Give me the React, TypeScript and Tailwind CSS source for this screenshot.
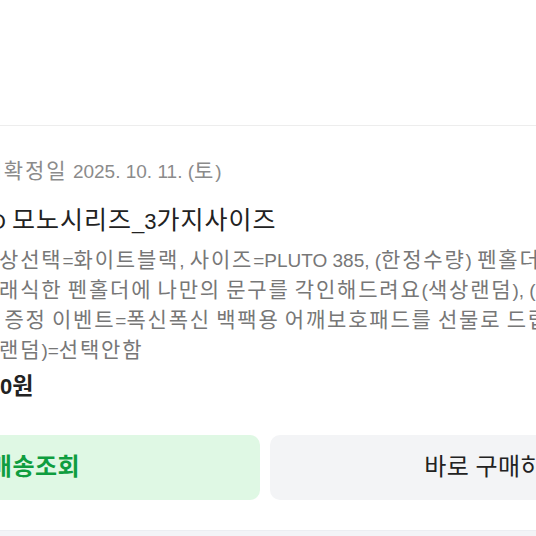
import React from 'react';

// Hangul in the reference is drawn bigger and looser than the Latin next to it, so Hangul runs get their own size
function Ko({ text, size }: { text: string; size: string }) {
  const parts = text.split(/([가-힣]+)/);
  return (
    <span>
      {parts.map((p, i) =>
        /[가-힣]/.test(p) ? (
          <span key={i} className={`leading-none ${size}`}>
            {p}
          </span>
        ) : (
          <React.Fragment key={i}>{p}</React.Fragment>
        )
      )}
    </span>
  );
}

const options = [
  '색상선택=화이트블랙, 사이즈=PLUTO 385, (한정수량) 펜홀더 각인 서비스=',
  '클래식한 펜홀더에 나만의 문구를 각인해드려요(색상랜덤), (한정수량)',
  '품 증정 이벤트=폭신폭신 백팩용 어깨보호패드를 선물로 드립니다(색상',
  '상랜덤)=선택안함',
];

export default function App() {
  return (
    <div className="w-[536px] h-[536px] overflow-hidden bg-white font-['Liberation_Sans','Noto_Sans_CJK_KR',sans-serif]">
      <div className="h-[125px]" />
      <div className="border-t border-[#ededed]">
        <div className="pt-[32px] whitespace-nowrap">
          <div className="-ml-[39px] h-[28px] text-[19px] leading-[28px] text-[#8b8b8b]">
            <Ko text="구매확정일 2025. 10. 11. (토)" size="text-[21px] tracking-[2px]" />
          </div>
          <div className="-ml-[67px] mt-[21px] h-[30px] text-[22px] leading-[30px] text-[#222]">
            <Ko text="PLUTO 모노시리즈_3가지사이즈" size="text-[25px] tracking-[1px]" />
          </div>
          <div className="mt-[9px] text-[19px] leading-[30px] text-[#777]">
            {options.map((o) => (
              <div key={o} className="-ml-[22px] h-[30px]">
                <Ko text={o} size="text-[21px] tracking-[1.8px]" />
              </div>
            ))}
          </div>
          <div className="-ml-[55px] mt-[6px] h-[30px] text-[22px] leading-[30px] font-bold text-[#222]">
            <Ko text="29,000원" size="text-[23px]" />
          </div>
        </div>

        <div className="-ml-[190px] mt-[33px] flex w-[910px] gap-[10px]">
          <button className="flex h-[65px] flex-1 items-center justify-center rounded-[10px] bg-[#dff8e4] text-[22px] font-bold text-[#0f9d3f]">
            <Ko text="배송조회" size="text-[24px] tracking-[0.5px]" />
          </button>
          <button className="flex h-[65px] flex-1 items-center justify-center rounded-[10px] bg-[#f3f4f6] text-[22px] text-[#222]">
            <Ko text="바로 구매하기" size="text-[24px] tracking-[0.5px]" />
          </button>
        </div>
      </div>
      <div className="mt-[30px] h-[40px] border-t border-[#eceef2] bg-[#f3f4f7]" />
    </div>
  );
}
